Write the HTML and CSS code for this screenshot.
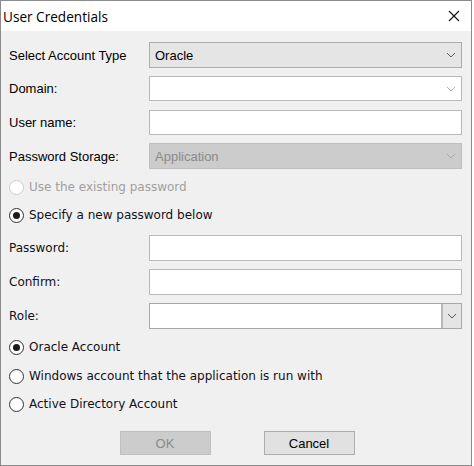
FILE: index.html
```html
<!DOCTYPE html>
<html>
<head>
<meta charset="utf-8">
<link rel="stylesheet" href="styles.css">
</head>
<body>
<div class="window">
  <div class="titlebar">
    <span class="title">User Credentials</span>
    <svg class="close" width="12" height="12" viewBox="0 0 12 12"><path d="M1 1 L11 11 M11 1 L1 11" stroke="#111" stroke-width="1.1" fill="none"/></svg>
  </div>
  <div class="body">
    <div class="row r-acct">
      <span class="label">Select Account Type</span>
      <div class="box combo-btn">
        <span class="value">Oracle</span>
        <svg class="chev" width="10" height="6" viewBox="0 0 10 6"><path d="M1 1 L5 5 L9 1" stroke="#606060" stroke-width="1" fill="none"/></svg>
      </div>
    </div>
    <div class="row r-domain">
      <span class="label">Domain:</span>
      <div class="box input">
        <span class="value"></span>
        <svg class="chev" width="10" height="6" viewBox="0 0 10 6"><path d="M1 1 L5 5 L9 1" stroke="#b4b4b4" stroke-width="1" fill="none"/></svg>
      </div>
    </div>
    <div class="row r-user">
      <span class="label">User name:</span>
      <div class="box input"></div>
    </div>
    <div class="row r-storage">
      <span class="label">Password Storage:</span>
      <div class="box disabled">
        <span class="value">Application</span>
        <svg class="chev" width="10" height="6" viewBox="0 0 10 6"><path d="M1 1 L5 5 L9 1" stroke="#a8a8a8" stroke-width="1" fill="none"/></svg>
      </div>
    </div>
    <div class="radio-row r-existing dim">
      <span class="radio off-dim"></span><span class="rtext">Use the existing password</span>
    </div>
    <div class="radio-row r-specify">
      <span class="radio on"></span><span class="rtext">Specify a new password below</span>
    </div>
    <div class="row r-pass">
      <span class="label tlabel">Password:</span>
      <div class="box input"></div>
    </div>
    <div class="row r-confirm">
      <span class="label tlabel">Confirm:</span>
      <div class="box input"></div>
    </div>
    <div class="row r-role">
      <span class="label tlabel">Role:</span>
      <div class="box input role">
        <span class="value"></span>
        <span class="drop">
          <svg width="10" height="6" viewBox="0 0 10 6"><path d="M1 1 L5 5 L9 1" stroke="#555" stroke-width="1" fill="none"/></svg>
        </span>
      </div>
    </div>
    <div class="radio-row r-oracle">
      <span class="radio on"></span><span class="rtext">Oracle Account</span>
    </div>
    <div class="radio-row r-windows">
      <span class="radio"></span><span class="rtext">Windows account that the application is run with</span>
    </div>
    <div class="radio-row r-ad">
      <span class="radio"></span><span class="rtext">Active Directory Account</span>
    </div>
    <div class="buttons">
      <div class="btn btn-disabled">OK</div>
      <div class="btn">Cancel</div>
    </div>
  </div>
</div>
</body>
</html>
```

FILE: styles.css
```css
html, body {
  margin: 0;
  padding: 0;
  background: #ffffff;
}

.window {
  width: 472px;
  height: 466px;
  box-sizing: border-box;
  border: 1px solid #8c8c8c;
  background: #f0f0f0;
  display: flex;
  flex-direction: column;
}

.titlebar {
  height: 30px;
  background: #ffffff;
  display: flex;
  align-items: center;
  justify-content: space-between;
  padding: 0 11px 0 2px;
  flex: none;
}

.title {
  font-family: "Open Sans", "Noto Sans", sans-serif;
  font-size: 13.6px;
  color: #000;
}

.close {
  display: block;
}

.body {
  flex: 1;
  padding: 11px 10px 0 8px;
  display: flex;
  flex-direction: column;
}

.row {
  display: grid;
  grid-template-columns: 140px 313px;
  align-items: center;
}

.label {
  font-family: "Liberation Sans", Arial, sans-serif;
  font-size: 13px;
  color: #000;
}

.tlabel {
  font-family: "DejaVu Sans", Verdana, sans-serif;
  font-size: 12px;
  color: #101020;
}

.box {
  box-sizing: border-box;
  height: 25px;
  border: 1px solid #b9b9b9;
  background: #fff;
  display: flex;
  align-items: center;
  justify-content: space-between;
  padding: 0 4px 0 5px;
  font-family: "Liberation Sans", Arial, sans-serif;
  font-size: 13px;
}

.combo-btn {
  height: 26px;
  background: #e5e5e5;
  border-color: #adadad;
  color: #000;
}

.disabled {
  height: 26px;
  background: #cccccc;
  border-color: #bfbfbf;
  color: #8a8a8a;
}

.chev {
  display: block;
  margin-right: 1px;
}

.role {
  padding-right: 0;
  height: 26px;
  border-color: #a8a8a8;
}

.drop {
  box-sizing: border-box;
  width: 20px;
  height: 24px;
  background: #e5e5e5;
  border-left: 2px solid #b8b8b8;
  display: flex;
  align-items: center;
  justify-content: center;
}

.r-acct { margin-top: 0; }
.r-domain { margin-top: 8px; }
.r-user { margin-top: 9px; }
.r-storage { margin-top: 8px; }
.r-existing { margin-top: 8px; }
.r-specify { margin-top: 8px; }
.r-pass { margin-top: 10px; }
.r-confirm { margin-top: 8px; }
.r-role { margin-top: 8px; }
.r-oracle { margin-top: 8px; }
.r-windows { margin-top: 9px; }
.r-ad { margin-top: 8px; }

.r-confirm .box, .r-pass .box { height: 26px; }

.radio-row {
  height: 20px;
  display: flex;
  align-items: center;
  font-family: "DejaVu Sans", Verdana, sans-serif;
  font-size: 12px;
  color: #101020;
}

.radio {
  box-sizing: border-box;
  width: 15px;
  height: 15px;
  border-radius: 50%;
  border: 1px solid #333;
  background: #fff;
  margin-right: 5px;
  position: relative;
  flex: none;
}

.radio.on::after {
  content: "";
  position: absolute;
  left: 3px;
  top: 3px;
  width: 7px;
  height: 7px;
  border-radius: 50%;
  background: #1a1a1a;
}

.radio.off-dim {
  border-color: #cccccc;
}

.dim .rtext {
  color: #a0a0a0;
}

.buttons {
  margin-top: 17px;
  display: flex;
  justify-content: center;
  gap: 53px;
  padding-left: 4px;
}

.btn {
  box-sizing: border-box;
  width: 91px;
  height: 24px;
  border: 1px solid #adadad;
  background: #e1e1e1;
  display: flex;
  align-items: center;
  justify-content: center;
  font-family: "Liberation Sans", Arial, sans-serif;
  font-size: 13px;
  color: #000;
}

.btn-disabled {
  background: #cccccc;
  border-color: #bfbfbf;
  color: #8a8a8a;
}
```
